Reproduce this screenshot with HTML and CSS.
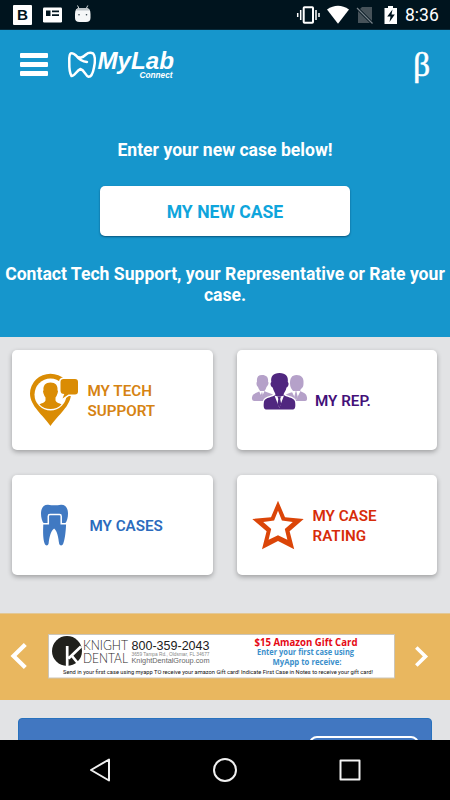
FILE: index.html
```html
<!DOCTYPE html>
<html lang="en">
<head>
<meta charset="utf-8">
<title>MyLab Connect</title>
<link rel="stylesheet" href="styles.css">
</head>
<body>
<div class="screen">
  <div class="status">
    <svg class="status-left" width="100" height="30" viewBox="0 0 100 30">
      <rect x="13" y="5" width="19" height="20" rx="1" fill="#fff"/>
      <text x="17" y="20.3" class="b-glyph" textLength="11" lengthAdjust="spacingAndGlyphs">B</text>
      <rect x="43" y="7.500" width="19" height="15" rx="1.200" fill="#fff"/>
      <path d="M46 10.500h4.500v5.500H46zM52 10.500h7v1.700h-7zM52 14.300h7V16h-7z" fill="#00141e"/>
      <path d="M77.500 5.500l1.800 3.500M87.800 5.500L86 9" stroke="#d4dadd" stroke-width="1" fill="none"/>
      <path d="M75 14q0-6 4-6h7.500q4 0 4 6v4q0 4-4.500 4h-6.500q-4.500 0-4.500-4z" fill="#f5f7f8"/>
      <path d="M76 10.500q1-2.500 3-2.500h7.500q2 0 3 2.500z" fill="#bdc4c7"/>
      <circle cx="79" cy="14.700" r=".8" fill="#34424a"/><circle cx="86.500" cy="14.700" r=".8" fill="#34424a"/>
    </svg>
    <svg class="status-right" width="110" height="30" viewBox="295 0 110 30">
      <rect x="303.700" y="7.200" width="9.300" height="15.600" rx=".8" fill="none" stroke="#fff" stroke-width="2"/>
      <path d="M297.700 13v4M300.700 10v10M316 10v10M319 13v4" stroke="#fff" stroke-width="1.500"/>
      <path d="M327 9.500Q338 2 349 9.500L338 23.800z" fill="#fff"/>
      <path d="M362 7h10v16h-14V11z" fill="#465259"/>
      <path d="M357 8l15.500 15.500" stroke="#00141e" stroke-width="3"/>
      <path d="M357 8l15.500 15.500" stroke="#78838a" stroke-width="1.200"/>
      <path d="M388 6h5v2h4v16h-12.500V8h3.500z" fill="#fff"/>
      <path d="M392.500 9.500l-5.300 7h3.300l-1 5.500 5.300-7.500h-3.300z" fill="#00141e"/>
    </svg>
    <span class="clock">8:36</span>
  </div>

  <header class="hero">
    <div class="bar">
      <div class="burger"><i></i><i></i><i></i></div>
      <svg class="logo" width="112" height="34" viewBox="66 47 112 34">
        <path d="M76 55.500C79 59 83 57.500 86 54.500C88 52.700 91 52.500 93 53.300C95.300 56 95 63 94 67.500C93 73 91 77 88.500 76.800C85.500 76 84.500 70 80.500 69C76.500 70.500 74.500 76.500 71.500 76C69 72 69.200 67 69.300 62C69.200 58 69 54 71 53.300C73 52.500 74.500 54 76 55.500C79 59.500 82 61.500 87 62" fill="none" stroke="#fff" stroke-width="2.500" stroke-linecap="round" stroke-linejoin="round"/>
        <text x="97.500" y="69" class="logo-name" textLength="76.500" lengthAdjust="spacingAndGlyphs">MyLab</text>
        <text x="139.500" y="78" class="logo-sub" textLength="33" lengthAdjust="spacingAndGlyphs">Connect</text>
      </svg>
      <span class="beta">β</span>
    </div>
    <p class="intro">Enter your new case below!</p>
    <div class="new-case">MY NEW CASE</div>
    <p class="contact">Contact Tech Support, your Representative or Rate your case.</p>
  </header>

  <main class="grid">
    <div class="card tech">
      <svg class="icon" width="52" height="56" viewBox="28 372 52 56">
        <path d="M50.500 426C43 415 30 406 30 393.500a20.500 19.800 0 0 1 41 0C71 406 58 415 50.500 426z" fill="#da8c04"/>
        <circle cx="50.500" cy="394.500" r="16" fill="#fff"/>
        <path d="M50.500 382.500c5 0 7.500 3 7 7.500q1 1 0 3.500-1 3-2 4v3c1 2.500 4 2.500 6 4q-4.500 4.500-11 4.500t-11-4.500c2-1.500 5-1.500 6-4v-3q-1-1-2-4-1-2.500 0-3.500c-.5-4.500 2-7.500 7-7.500z" fill="#da8c04"/>
        <path d="M63.500 379h11.500q3 0 3 3v9.500q0 3-3 3h-6.500l-6 4 1.800-4.500q-3.800 0-3.800-3.500V382q0-3 3-3z" fill="#da8c04" stroke="#fff" stroke-width="3" paint-order="stroke"/>
      </svg>
      <span>MY TECH<br>SUPPORT</span>
    </div>
    <div class="card rep">
      <svg class="icon" width="58" height="40" viewBox="250 372 58 40">
        <g fill="#b5a1c9">
          <path d="M262 375c5 0 6.500 3 6 6.500 1.500 2-.5 4.500-1.500 5.500-.5 2-1.500 3-2 4 3 2 8 2 9.500 5v5h-20q-2.500 0-2-3.500c.5-5 7-4.500 8-7-1-1-1.500-2-2-3.500-1.500-1-2-4-1-5.500-.5-4 1-6.500 5-6.500z"/>
          <path d="M296.500 375c5 0 7.500 3 7 8 0 4-1 4.500-2.500 6-1 1-1 2 0 2.500 3 1.500 5.500 2 6 6q.5 3.500-2 3.500h-20v-5c1.500-3 6-3 8.500-4.500-2-2.500-3.500-4.500-3.500-8 0-5 1.500-8.500 6.500-8.500z"/>
        </g>
        <path d="M259 391l2.800 6 2.700-6M291.500 391l4.500 9 4.500-9" fill="#fff"/>
        <path d="M262 391.500l1 4-1.300 2-1-2zM296 390l1.800 7-1.800 3-1.800-3z" fill="#b5a1c9"/>
        <path d="M279.500 373c6.500 0 9 3.500 8.300 9 1.800 1.500.2 5-1.300 5.500-.5 3.500-2.500 5-3 7 2 3 10.500 2.500 11.500 7 .7 4 .5 8-2 8h-27c-2.500 0-2.700-4-2-8 1-4.500 9.500-4 11.500-7-.5-2-2-3.500-2.800-7-1.500-.5-3.200-4-1.400-5.500-.8-5.500 1.700-9 8.200-9z" fill="#50277f" stroke="#fff" stroke-width="2.600" paint-order="stroke"/>
        <path d="M274.500 395.500q4.500 2 9.500 0l-4.700 12.500z" fill="#fff"/>
        <path d="M277.500 396.500h3.500l-.8 2.500 1 5-2 4-1.700-4 .8-5z" fill="#50277f"/>
      </svg>
      <span>MY REP.</span>
    </div>
    <div class="card cases">
      <svg class="icon" width="30" height="44" viewBox="40 503 30 44">
        <path d="M44 523.500c-2-2-3-6-3-10 0-6 3-9 7-8.800q6.500 1.300 13 0c4-.2 7 2.800 7 8.800 0 4-1 8-3 10z" fill="#4079c2"/>
        <path d="M43.300 524h5v-7.500q0-1.500 1.500-1.500h10.500q1.500 0 1.500 1.500v7.500h4.300c-.3 7-1 15-3 20-.8 2-3.500 2-4-.5-.8-6-1.500-12-5-15-3.800 3-4.700 9-5.500 15-.5 2.500-3 2.500-3.800.5-2-5-1.800-13-1.500-20z" fill="#4079c2"/>
        <path d="M42 523.700h6.300v-7.500q0-1.700 1.700-1.700h9.500q1.700 0 1.700 1.700v7.500H67.500" fill="none" stroke="#fff" stroke-width="1.500"/>
      </svg>
      <span>MY CASES</span>
    </div>
    <div class="card rating">
      <svg class="icon" width="54" height="52" viewBox="251 499 54 52">
        <path fill-rule="evenodd" d="M278 500.700l7 16.500 18.700 1.800-14.100 12.200 4.600 18L278 541l-16 8.200 4.600-18L252.300 519l18.700-1.800zM278 510.700l-3.900 9.900-10.900 1.400 8 7-2.600 10.700 9.400-4.500 9.400 4.500-2.600-10.700 8-7-10.900-1.400z" fill="#db4508"/>
      </svg>
      <span>MY CASE<br>RATING</span>
    </div>
  </main>

  <section class="carousel">
    <svg class="prev" width="20" height="30" viewBox="9 641 20 30"><path d="M25.300 644.500L13.500 656 25.300 667.500" fill="none" stroke="#fff" stroke-width="4.200"/></svg>
    <svg class="ad" width="348" height="45" viewBox="48 634 348 45">
      <rect x="48.500" y="634.500" width="346" height="43.500" fill="#fff" stroke="#cbc5b8"/>
      <circle cx="67" cy="651" r="15" fill="#20201c"/>
      <path d="M67.200 646v20M81 646.500L68.500 658.500M72 656l6.500 8" fill="none" stroke="#fff" stroke-width="2.700"/>
      <g class="light">
        <text x="83" y="650.200" textLength="45" lengthAdjust="spacingAndGlyphs">KNIGHT</text>
        <text x="83" y="662.600" textLength="45" lengthAdjust="spacingAndGlyphs">DENTAL</text>
      </g>
      <text class="phone" x="131.500" y="649.800" textLength="78" lengthAdjust="spacingAndGlyphs">800-359-2043</text>
      <text class="addr" x="131.500" y="655.800" textLength="78" lengthAdjust="spacingAndGlyphs">3659 Tampa Rd., Oldsmar, FL 34677</text>
      <text class="site" x="131.500" y="662.600" textLength="78" lengthAdjust="spacingAndGlyphs">KnightDentalGroup.com</text>
      <text class="gift" x="254.500" y="646" textLength="103" lengthAdjust="spacingAndGlyphs">$15 Amazon Gift Card</text>
      <text class="offer" x="257" y="654.500" textLength="97" lengthAdjust="spacingAndGlyphs">Enter your first case using</text>
      <text class="offer" x="272.500" y="665.300" textLength="69" lengthAdjust="spacingAndGlyphs">MyApp to receive:</text>
      <text class="terms" x="63" y="674.300" textLength="310" lengthAdjust="spacingAndGlyphs">Send in your first case using myapp TO receive your amazon Gift card! Indicate First Case in Notes to receive your gift card!</text>
    </svg>
    <svg class="next" width="18" height="26" viewBox="412 643 18 26"><path d="M416.300 647.500L425.500 656.400 416.300 665.500" fill="none" stroke="#fff" stroke-width="3.600"/></svg>
  </section>

  <section class="more"><div class="panel"><div class="outline"></div></div></section>

  <nav class="nav">
    <svg width="450" height="60" viewBox="0 740 450 60" fill="none" stroke="#f0f0f0" stroke-width="2" stroke-linejoin="round">
      <path d="M109 759.500v21L91 770z"/>
      <circle cx="225" cy="770" r="11"/>
      <rect x="340.500" y="760.500" width="19" height="19"/>
    </svg>
  </nav>
</div>
</body>
</html>
```
FILE: styles.css
```css
* { box-sizing: border-box; }
body { margin: 0; font-family: Roboto, "Liberation Sans", sans-serif; }
p { margin: 0; }
svg { display: block; flex: none; }
.screen { width: 450px; height: 800px; overflow: hidden; display: flex; flex-direction: column; background: #e2e3e5; }

.status { height: 30px; flex: none; background: #00141e; display: flex; align-items: center; border-bottom: 1px solid #062a3b; }
.status svg { height: 30px; }
.status-right { margin-left: 195px; }
.clock { color: #fff; font-size: 17.5px; line-height: 30px; font-weight: 400; padding-top: 1px; }
.b-glyph { font: bold 15px "Liberation Sans", sans-serif; fill: #00141e; }

.hero { height: 307px; flex: none; background: #1696cc; color: #fff; text-align: center; font-weight: 700; font-size: 17.6px; line-height: 21px; display: flex; flex-direction: column; align-items: center; }
.bar { width: 100%; height: 70px; flex: none; display: flex; align-items: center; padding: 0 20px; }
.burger { width: 28px; display: flex; flex-direction: column; gap: 4px; margin-bottom: 1px; }
.burger i { height: 5px; background: #fff; border-radius: 1px; }
.logo { margin: 0 auto 2px 18px; }
.logo-name { font: italic bold 23px "Liberation Sans", sans-serif; fill: #fff; }
.logo-sub { font: italic bold 9px "Liberation Sans", sans-serif; fill: #fff; }
.beta { font: 33px/32px "Liberation Serif", serif; -webkit-text-stroke: .6px #fff; }
.intro { margin-top: 40px; }
.new-case { width: 250px; height: 50px; margin: 25px 0 28px; border-radius: 5px; background: #fff; color: #0fa5dc; line-height: 52px; box-shadow: 0 1px 2px rgba(0, 40, 70, .6); }
.contact { width: 450px; }

.grid { height: 276px; flex: none; padding: 13px 12px 0; display: grid; grid-template-columns: 201px 200px; grid-template-rows: 100px 100px; column-gap: 24px; row-gap: 25px; align-content: start; }
.card { background: #fff; border-radius: 5px; box-shadow: 0 2px 5px rgba(0, 0, 0, .3); display: flex; align-items: center; font-size: 15.2px; line-height: 20.500px; font-weight: 600; }
.card span { padding-top: 2px; }
.tech { color: #d68312; padding-left: 16px; }
.tech span { margin-left: 7.5px; }
.rep { color: #431079; padding-left: 13px; }
.rep .icon { margin-bottom: 16px; }
.rep span { margin-left: 7px; }
.cases { color: #2b6bbd; padding-left: 28px; }
.cases span { margin-left: 19.5px; }
.rating { color: #d72c0a; padding-left: 14px; }
.rating span { margin-left: 7.5px; }

.carousel { height: 87px; flex: none; background: #e9b75f; display: flex; align-items: center; padding: 0 9px 2px; border-top: 1px solid #e3c895; }
.ad { margin-left: 19px; }
.next { margin-left: 16px; }
.light { font: 300 13.5px Lato, sans-serif; fill: #282828; }
.phone { font: 13.5px "Liberation Sans", sans-serif; fill: #202020; }
.addr { font: 300 5.5px "Liberation Sans", sans-serif; fill: #888; }
.site { font: 7px "Liberation Sans", sans-serif; fill: #666; }
.gift { font: bold 10.5px "Open Sans", sans-serif; fill: #e50914; }
.offer { font: bold 8px "Open Sans", sans-serif; fill: #3b8fcb; }
.terms { font: 5.5px Roboto, sans-serif; fill: #111; }

.more { height: 40px; flex: none; padding: 17.500px 18px 0 17.500px; overflow: hidden; }
.panel { height: 60px; background: #4177c1; border: 1px solid #2771bd; border-radius: 4px; display: flex; justify-content: flex-end; padding: 17px 12px 0; }
.outline { width: 110px; height: 40px; border: 2.500px solid #fff; border-radius: 8px; }
.nav { height: 60px; flex: none; background: #000; }
```
